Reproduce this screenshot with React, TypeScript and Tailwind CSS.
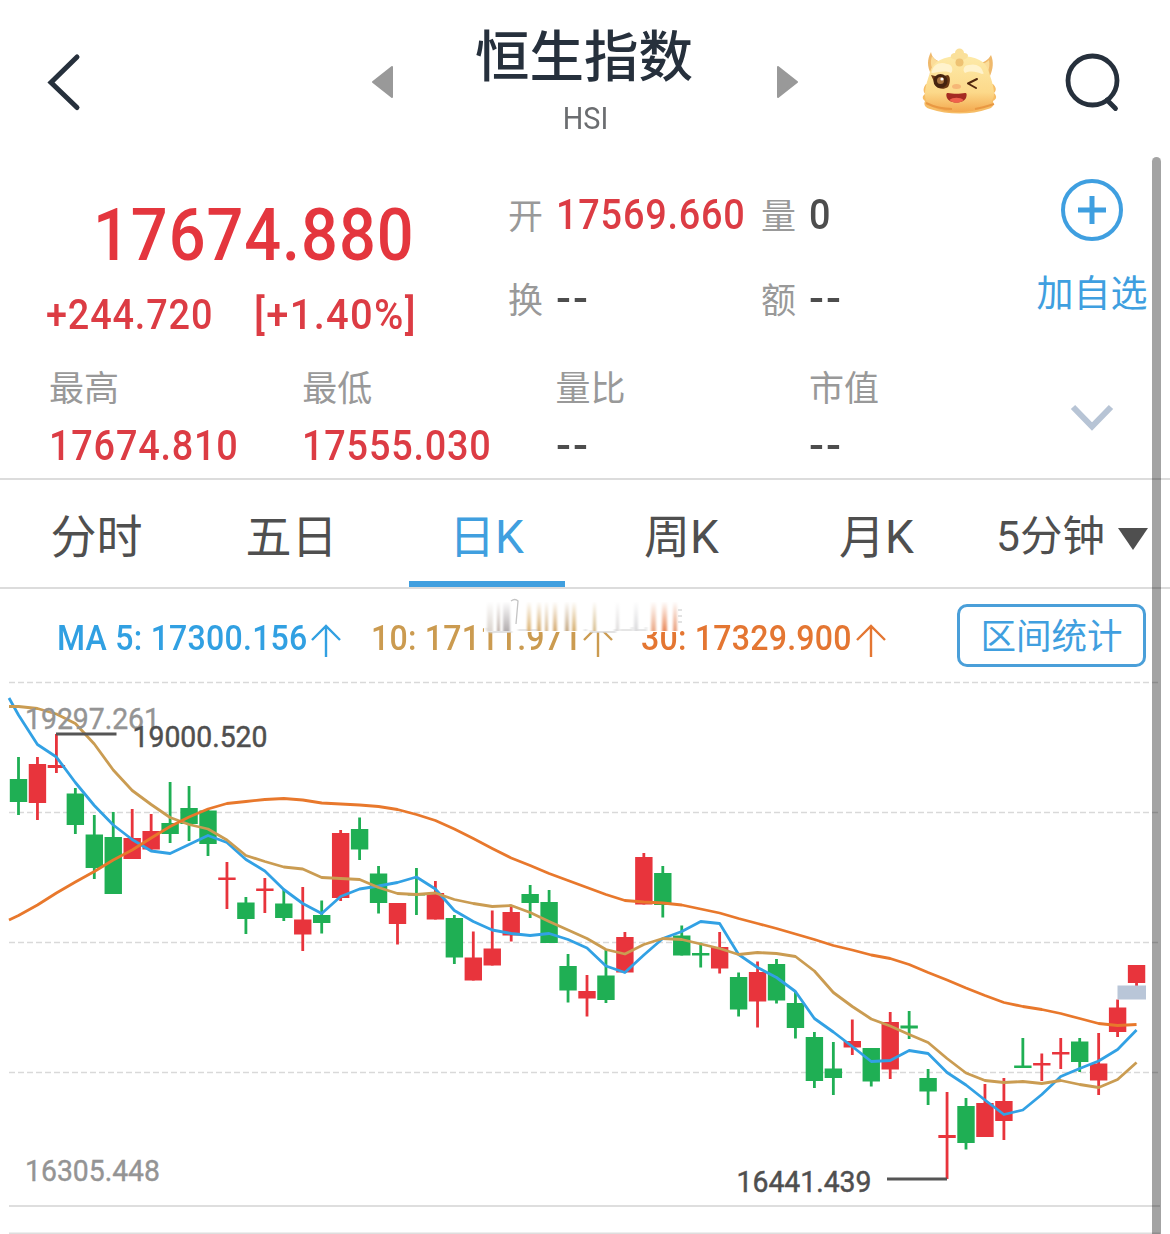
import type { ReactNode } from "react";
import clsx from "clsx";

// [high, body top, body bottom, low, rising]
type Candle = [number, number, number, number, 0 | 1];

const STEP = 18.95;
const candleX = (i: number) => 18.5 + i * STEP;

const candles: Candle[] = [
    [757, 779, 802, 815, 0], [757, 764, 803, 820, 1], [734, 765, 768, 773, 1], [788, 793.5, 825, 834, 0],
    [815, 834.5, 868, 879, 0], [812, 837, 894, 894, 0], [809, 838, 859, 859, 1], [814, 831, 849.5, 850, 1],
    [782, 823, 834, 843, 0], [786, 808, 824, 841, 0], [810, 810.5, 844, 856, 0], [862, 877.5, 880, 909, 1],
    [897, 902.5, 919, 934, 0], [878, 888.5, 891, 913, 1], [889, 903.5, 918, 921, 0], [887, 919.5, 934.5, 951, 1],
    [900.5, 915, 923, 933.5, 0], [830, 833, 898, 901, 1], [817.5, 829, 849.5, 860, 0], [866, 873.5, 903, 913.5, 0],
    [903, 903, 924, 944.5, 1], [868, 893, 895.5, 915, 0], [881, 893, 919.5, 919.5, 1], [915, 918, 957.5, 964, 0],
    [931.5, 957.5, 980.5, 980.5, 1], [910.5, 948.5, 965.5, 965.5, 1], [906.5, 912, 935.5, 941.5, 1], [885, 894, 903, 918, 0],
    [890, 902, 943, 943, 0], [954, 966, 990.5, 1002.5, 0], [975, 991, 998.5, 1016.5, 1], [950, 975.5, 1000, 1003, 0],
    [932, 937, 972.5, 973, 1], [853, 857, 904.5, 904.5, 1], [866, 873, 905, 917.5, 0], [925.5, 935.5, 955.5, 955.5, 0],
    [942.5, 953, 955.5, 967.5, 0], [932, 947, 968.5, 973.5, 1], [972.5, 977, 1009.5, 1016.5, 0], [961.5, 972, 1001.5, 1027.5, 1],
    [959, 964, 1000.5, 1003.5, 0], [992, 1003, 1028, 1038.5, 0], [1032, 1037, 1081, 1088, 0], [1042, 1068.5, 1078, 1095, 0],
    [1019.5, 1041, 1047.5, 1055, 1], [1048, 1048, 1081.5, 1086.5, 0], [1012, 1022, 1069.5, 1079, 1], [1011, 1025.5, 1028.5, 1039, 0],
    [1069, 1078, 1091.5, 1105, 0], [1092, 1135, 1138, 1179, 1], [1098, 1106, 1143, 1149.5, 0], [1084, 1103, 1137, 1137, 1],
    [1078, 1101, 1121, 1140, 1], [1038, 1065.5, 1068, 1068, 0], [1053.5, 1063, 1065.5, 1081, 1], [1038, 1052, 1054.5, 1069, 1],
    [1038, 1041.5, 1062, 1072, 0], [1033, 1063.5, 1080.5, 1095, 1], [999.5, 1007.5, 1032, 1037, 1], [965, 965, 983, 986, 1],
];

const ma5 = [
    715, 744.5, 757, 782.5, 805.5, 825, 839.5, 851, 853.5, 844.5, 835.5, 842.5, 859.5, 871, 889.5, 903.5, 913.5, 896.5, 889, 886,
    882.5, 877, 889, 910.5, 921.5, 930, 933.5, 935.5, 933.5, 939.5, 948, 966, 972.5, 955, 938.5, 931.5, 921.5, 923.5, 954.5, 967.5,
    977.5, 991.5, 1018.5, 1032, 1046.5, 1061.5, 1060.5, 1050.5, 1053.5, 1072.5, 1085, 1100, 1114.5, 1110, 1094.5, 1076.5, 1068.5, 1061, 1049.5, 1030,
];

const ma10 = [
    706.5, 708.5, 714, 723.5, 744, 770, 790.5, 804.5, 817.5, 824.5, 829, 840, 855.5, 861.5, 867, 869, 877.5, 878.5, 879.5, 887.5,
    893.5, 894.5, 893, 899.5, 903.5, 906.5, 905.5, 912.5, 921.5, 930, 938.5, 949.5, 954, 944.5, 938.5, 939.5, 944, 948.5, 954.5, 952.5,
    953.5, 956.5, 971, 992.5, 1006.5, 1019, 1026, 1034.5, 1042.5, 1058.5, 1073, 1080.5, 1082.5, 1081.5, 1083.5, 1080.5, 1084.5, 1087.5, 1079.5, 1062.5,
];

const ma30 = [
    915.5, 905, 893, 882, 871.5, 860, 850, 838, 826.5, 817, 809, 803.5, 801.5, 799.5, 798.5, 800, 803, 804, 805, 806.5,
    809.5, 814.5, 820.5, 829, 838.5, 848.5, 858, 865.5, 873.5, 880.5, 887.5, 894.5, 900.5, 902, 903, 905, 909, 913, 918.5, 923.5,
    928.5, 934, 939.5, 945.5, 950, 955, 958.5, 964.5, 972.5, 980, 988, 995.5, 1002.5, 1006.5, 1009.5, 1013.5, 1018.5, 1023.5, 1025.5, 1024.5,
];

const toPoints = (start: number, values: number[]) =>
    [`9,${start}`, ...values.map((y, i) => `${candleX(i)},${y}`)].join(" ");

const tabs = ["分时", "五日", "日K", "周K", "月K"];

const stats = [
    { label: "最高", value: "17674.810" },
    { label: "最低", value: "17555.030" },
    { label: "量比", value: "--" },
    { label: "市值", value: "--" },
];

function Mascot() {
    return (
        <svg width="76" height="68" viewBox="0 0 76 68">
            <defs>
                <linearGradient id="face" x1="0" y1="0" x2="0" y2="1">
                    <stop offset="0" stopColor="#fdeaa8" />
                    <stop offset="0.65" stopColor="#fcd98a" />
                    <stop offset="1" stopColor="#f3a94f" />
                </linearGradient>
            </defs>
            <path d="M9 4c-4 7-4 15 0 22l13-11C14 13 10 10 9 4zM69 7c3 7 2 14-1 21L54 16c8-1 12-4 15-9z" fill="#efb96c" />
            <path d="M10 8c-2 6-1 10 1 14l8-8c-5-1-7-3-9-6zM67 12c1 5 0 8-1 12l-8-8c4 0 7-2 9-4z" fill="#fbdc98" />
            <path d="M4 36c-3 4-3 7-1 10-3 2-3 5 0 7-2 4 1 7 5 8 18 6 41 6 58 0 5-1 6-4 5-8 4-2 4-5 1-8 3-3 2-6-1-9z" fill="#f6bd66" />
            <path d="M38 8c16 0 26 5 29 16 2 8 5 13 5 22 0 12-16 18-35 18S3 59 3 47c0-10 3-15 5-23C11 13 22 8 38 8z" fill="url(#face)" />
            <path d="M29 10c-1-3 1-5 4-5 0-6 9-6 9 0 4 0 5 3 3 5l-7 4z" fill="#fae09a" />
            <circle cx="37.500" cy="14.500" r="4" fill="#eec273" />
            <path d="M10 23c1-6 8-10 15-7 5 0 7 6 4 9-6-3-12-1-18 0-2 0-2-1-1-2zM61 24c-1-6-8-9-14-7-5 0-7 5-4 8 6-3 12-1 17 1 2 0 2-1 1-2z" fill="#fff3cd" />
            <path d="M9 27l8 2 9-2c3 2 2 9 0 12-4 3-10 2-12-1z" fill="#6b3914" />
            <circle cx="18.500" cy="33" r="7" fill="#44230f" />
            <circle cx="18.500" cy="32.500" r="3.500" fill="#a97540" />
            <circle cx="20" cy="31" r="1.600" fill="#fff" />
            <path d="M55 31l-9 4.500 8 4.500" fill="none" stroke="#51280f" strokeWidth="2" strokeLinecap="round" strokeLinejoin="round" />
            <ellipse cx="34.500" cy="38.500" rx="4.500" ry="2.500" fill="#f6b777" />
            <path d="M26 45c5 1 12 1 17 0 2 0 2 2 1 5-3 6-16 6-19 0-1-3-1-5 1-5z" fill="#a52b22" />
            <path d="M27.500 52c3-3 11-3 14 0-3 3.500-11 3.500-14 0z" fill="#f0614c" />
            <path d="M4 55c8 4 16 6 26 6M72 56c-6 2-12 4-19 5" stroke="#e99842" strokeWidth="2" fill="none" />
        </svg>
    );
}

function Header() {
    return (
        <header className="flex h-[164px] items-center text-[#26303c]">
            <button className="w-[372px] pl-[46px]">
                <svg width="36" height="60" viewBox="0 0 36 60" fill="none" stroke="currentColor" strokeWidth="5">
                    <path d="M31 5L5 30.500L31 55.500" strokeLinecap="round" />
                </svg>
            </button>
            <div className="flex w-[426px] items-center justify-between">
                <svg width="21" height="32" viewBox="0 0 21 32" fill="#999">
                    <path d="M20 1L1 16L20 31z" stroke="#999" strokeWidth="2" strokeLinejoin="round" />
                </svg>
                <div className="flex flex-col items-center gap-3">
                    <h1 className="-ml-[2px] pt-[1px] text-[54.500px] leading-[60px] font-medium">恒生指数</h1>
                    <span className="origin-center scale-x-93 text-[31px] leading-10 text-[#6b6d70]">HSI</span>
                </div>
                <svg width="21" height="32" viewBox="0 0 21 32" fill="#999">
                    <path d="M1 1L20 16L1 31z" stroke="#999" strokeWidth="2" strokeLinejoin="round" />
                </svg>
            </div>
            <div className="flex items-center gap-[67px] pl-[124px]">
                <Mascot />
                <svg width="56" height="60" viewBox="0 0 56 60" fill="none" stroke="currentColor" strokeWidth="4.800">
                    <circle cx="27.500" cy="28.500" r="24.500" />
                    <path d="M42 48l8.500 8.500" strokeLinecap="round" />
                </svg>
            </div>
        </header>
    );
}

function Figure({ children, red }: { children: ReactNode; red?: boolean }) {
    return (
        <span
            className={clsx(
                "inline-block origin-left text-[42px] leading-[50px] font-medium",
                children === "--" ? "scale-x-105 tracking-[2px]" : "scale-x-90 tracking-[0.900px]",
                red ? "text-[#dc3c44]" : "text-[#4d4d4d]"
            )}
        >
            {children}
        </span>
    );
}

function Field({ label, children, red }: { label: string; children: ReactNode; red?: boolean }) {
    return (
        <div className="flex w-[253px] items-start gap-[13px] whitespace-nowrap">
            <span className="pt-[3px] text-[35px] leading-[50px] text-[#999]">{label}</span>
            <Figure red={red}>{children}</Figure>
        </div>
    );
}

function Quote() {
    return (
        <section className="h-[316px] border-b-2 border-[#dcdcdc]">
            <div className="flex h-[186px]">
                <div className="w-[508px] pt-[30px] font-medium whitespace-nowrap text-[#e4363e]">
                    <div className="ml-[93px] origin-left scale-x-90 text-[72px] leading-[84px] tracking-[1.100px]">17674.880</div>
                    <div className="mt-[12px] flex pl-[46px] text-[42px] leading-[50px] text-[#dc3c44]">
                        <span className="w-[208px] origin-left scale-x-90 tracking-[0.950px]">+244.720</span>
                        <span className="origin-left scale-x-95 tracking-[1.400px]">[+1.40%]</span>
                    </div>
                </div>
                <div className="grid w-[506px] grid-cols-2 content-start gap-y-[31px] pt-[26px]">
                    <Field label="开" red>17569.660</Field>
                    <Field label="量">0</Field>
                    <Field label="换">--</Field>
                    <Field label="额">--</Field>
                </div>
                <button className="flex w-[156px] flex-col items-center pt-[14px] text-[#3f9fe0]">
                    <svg width="64" height="64" viewBox="0 0 64 64" fill="none" stroke="currentColor">
                        <circle cx="32" cy="32" r="29" strokeWidth="4" />
                        <path d="M32 18v28M18 32h28" strokeWidth="5" />
                    </svg>
                    <span className="mt-[33px] text-[37px] leading-10 whitespace-nowrap">加自选</span>
                </button>
            </div>
            <div className="flex pt-[20px] pl-[49px]">
                {stats.map(({ label, value }) => (
                    <div key={label} className="flex w-[253.300px] flex-col items-start gap-[11px]">
                        <span className="text-[35px] leading-10 text-[#999]">{label}</span>
                        <Figure red={value !== "--"}>{value}</Figure>
                    </div>
                ))}
                <svg className="mt-[32px] ml-[8px]" width="44" height="32" viewBox="0 0 44 32" fill="none">
                    <path d="M3 5L22 24.500L41 5" stroke="#b7c4d5" strokeWidth="6" />
                </svg>
            </div>
        </section>
    );
}

function Tabs() {
    return (
        <nav className="flex h-[109px] border-b-2 border-[#dcdcdc] text-[46px] leading-[60px] text-[#4f4f4f]">
            {tabs.map((tab) => (
                <button key={tab} className={clsx("flex w-[195px] flex-col items-center justify-between pt-[27px] pr-[2px]", tab === "日K" && "text-[#409fdf]")}>
                    <span className="whitespace-nowrap">{tab}</span>
                    {tab === "日K" && <span className="h-[6px] w-[156px] bg-[#409fdf]" />}
                </button>
            ))}
            <button className="flex items-center gap-3 pt-[6px] pl-[21px] whitespace-nowrap">
                <span className="text-[42.500px]">5分钟</span>
                <svg className="mt-[4px]" width="32" height="24" viewBox="0 0 32 24" fill="#4f4f4f">
                    <path d="M1 1h30L16 23z" />
                </svg>
            </button>
        </nav>
    );
}

function Arrow() {
    return (
        <svg className="mt-[6px]" width="32" height="34" viewBox="0 0 32 34" fill="none" stroke="currentColor" strokeWidth="2.400">
            <path d="M16 2v31M2 16L16 2L30 16" />
        </svg>
    );
}

const smears = [
    { x: 3, w: 6, color: "#d9d2cb" }, { x: 13, w: 3, color: "#b8a9a0" }, { x: 19, w: 7, color: "#aaa4a6" },
    { x: 43, w: 4, color: "#d9ab63" }, { x: 53, w: 4, color: "#d3a55f" }, { x: 61, w: 3, color: "#cfaa78" },
    { x: 69, w: 4, color: "#d0a160" }, { x: 81, w: 4, color: "#bfa078" }, { x: 88, w: 4, color: "#d2a65d" },
    { x: 109, w: 3, color: "#cfb076" }, { x: 132, w: 3, color: "#d8d5d5" }, { x: 150, w: 4, color: "#d6d6d8" },
    { x: 167, w: 5, color: "#e9a27c" }, { x: 178, w: 5, color: "#e77d4a" }, { x: 189, w: 4, color: "#e7926a" },
];

// Faded strip lying over the upper half of the MA10 figures
function Smear() {
    return (
        <svg className="absolute top-[9px] left-[484px]" width="204" height="36" viewBox="0 0 204 36">
            <defs>
                <linearGradient id="fade" x1="0" y1="0" x2="0" y2="1">
                    <stop offset="0.1" stopColor="#fff" />
                    <stop offset="1" stopColor="#fff" stopOpacity="0.1" />
                </linearGradient>
                <filter id="soft">
                    <feGaussianBlur stdDeviation="1.3 0.5" />
                </filter>
            </defs>
            <rect y="1" width="195" height="33" fill="#fff" />
            <g filter="url(#soft)">
                <path d="M2 30q3 6 8 4h18M34 32h22M100 32h3M107 32v2h24v-3M136 32h12v-3M153 32h9v-3" stroke="#d5d5d5" strokeWidth="2" fill="none" opacity="0.7" />
                {smears.map(({ x, w, color }) => (
                    <rect key={x} x={x} y="4" width={w} height="29" fill={color} />
                ))}
            </g>
            <rect width="204" height="33" fill="url(#fade)" />
            <path d="M27 3q4-3 7 0l-2 23" stroke="#c4c4c4" strokeWidth="1.300" fill="none" />
            <path d="M194 12h4M194 18h4M194 24h4" stroke="#e2e2e2" strokeWidth="2" />
        </svg>
    );
}

function Legend() {
    return (
        <div className="relative flex h-[79px] items-center justify-between pr-6 pl-[57px] pb-[2px]">
            <div className="flex items-center pt-[20px] text-[34.500px] leading-10 font-medium tracking-[0.250px] whitespace-nowrap">
                <div className="flex w-[314px] items-center text-[#31a0e2]">
                    <span className="w-[253px] origin-left scale-x-93">MA 5: 17300.156</span>
                    <Arrow />
                </div>
                <div className="flex w-[270px] items-center text-[#cb9b50]">
                    <span className="w-[211px] origin-left scale-x-93">10: 17111.971</span>
                    <Arrow />
                </div>
                <div className="flex items-center text-[#e47632]">
                    <span className="w-[214px] origin-left scale-x-93">30: 17329.900</span>
                    <Arrow />
                </div>
            </div>
            <button className="mt-[15px] h-[63px] w-[189px] shrink-0 rounded-[10px] border-3 border-[#4a9fd9] pt-[3px] text-[35.500px] leading-10 whitespace-nowrap text-[#409fdf]">
                区间统计
            </button>
            <Smear />
        </div>
    );
}

function Chart() {
    return (
        <svg className="block" width="1170" height="566" viewBox="0 668 1170 566" fontSize="30" fontFamily="Roboto, sans-serif">
            {[682.5, 812.5, 942.5, 1072.5].map((y) => (
                <path key={y} d={`M9 ${y}H1160`} stroke="#d9d9d9" strokeWidth="1.600" strokeDasharray="6 3" />
            ))}
            <path d="M9 1206H1160M9 1233.500H1160" stroke="#dedede" strokeWidth="2" />
            {candles.map(([high, top, bottom, low, up], i) => (
                <g key={i} fill={up ? "#e8343c" : "#1faf54"}>
                    <rect x={candleX(i) - 1.4} y={high} width="2.800" height={low - high} />
                    <rect x={candleX(i) - 8.7} y={top} width="17.400" height={bottom - top} />
                </g>
            ))}
            <rect x="1117.500" y="985.500" width="28.500" height="14" fill="#b9c6d8" />
            <g fill="none" strokeWidth="2.800" strokeLinejoin="round">
                <polyline points={toPoints(698, ma5)} stroke="#32a1e4" />
                <polyline points={toPoints(706.5, ma10)} stroke="#ca9c52" />
                <polyline points={toPoints(920, ma30)} stroke="#e8782c" />
            </g>
            <path d="M56 734H116.500M887 1179H947" stroke="#555" strokeWidth="3" />
            <g fill="#949494" stroke="#949494" strokeWidth="0.400">
                <text x="25" y="729" textLength="135" lengthAdjust="spacingAndGlyphs">19297.261</text>
                <text x="25" y="1181" textLength="135" lengthAdjust="spacingAndGlyphs">16305.448</text>
            </g>
            <g fill="#4f4f4f" stroke="#4f4f4f" strokeWidth="0.500">
                <text x="132.500" y="747" textLength="135" lengthAdjust="spacingAndGlyphs">19000.520</text>
                <text x="736.500" y="1192" textLength="135" lengthAdjust="spacingAndGlyphs">16441.439</text>
            </g>
        </svg>
    );
}

export default function App() {
    return (
        <main className="relative h-[1234px] w-[1170px] overflow-hidden bg-white font-['Roboto','Noto_Sans_CJK_SC',sans-serif]">
            <Header />
            <Quote />
            <Tabs />
            <Legend />
            <Chart />
            {/* Scrollbar */}
            <div className="absolute top-[157px] right-[9px] bottom-0 w-[9px] rounded-t-full bg-black/36" />
        </main>
    );
}
